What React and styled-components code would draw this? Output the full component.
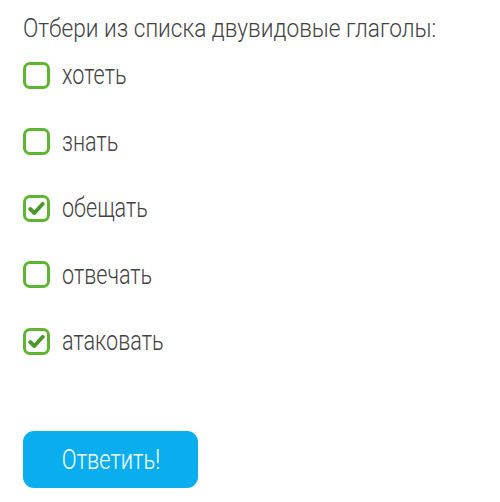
import React, { useState } from 'react';
import styled, { createGlobalStyle } from 'styled-components';

const GlobalStyle = createGlobalStyle`
  body {
    margin: 0;
    background: #ffffff;
    font-family: Roboto, 'Noto Sans', sans-serif;
  }
`;

const Page = styled.div`
  width: 500px;
  height: 502px;
  padding: 12px 23px 0;
  box-sizing: border-box;
  color: #424242;
`;

/* the reference uses a condensed face; squeeze Roboto Light to match */
const Narrow = styled.span`
  display: inline-block;
  white-space: nowrap;
  transform: scaleX(${({ $scale }) => $scale});
  transform-origin: ${({ $origin }) => $origin || 'left center'};
`;

const Title = styled.h2`
  margin: 0;
  font-size: 26px;
  font-weight: 300;
  line-height: 32px;
`;

const List = styled.ul`
  list-style: none;
  margin: 18px 0 0;
  padding: 0;
  display: flex;
  flex-direction: column;
  gap: 40.5px;
`;

const Item = styled.li`
  display: flex;
  align-items: center;
  gap: 12px;
  height: 26px;
  cursor: pointer;
`;

const Box = styled.span`
  flex: none;
  width: 27px;
  height: 27px;
  box-sizing: border-box;
  border: 3px solid #5db532;
  border-radius: 7px;
  display: flex;
  align-items: center;
  justify-content: center;
`;

const Label = styled.span`
  font-size: 27px;
  font-weight: 300;
  line-height: 30px;
`;

const Button = styled.button`
  display: flex;
  align-items: center;
  justify-content: center;
  margin-top: 77px;
  width: 175px;
  height: 57px;
  padding: 0;
  border: none;
  border-radius: 11px;
  background: #0aaeef;
  color: #ffffff;
  font-family: Roboto, sans-serif;
  font-size: 28px;
  font-weight: 300;
  cursor: pointer;
`;

const Check = () => (
  <svg width="17" height="15" viewBox="0 0 17 15">
    <path d="M2.2 8 L6.4 12 L14.8 2.8" fill="none" stroke="#48982a" strokeWidth="3.8" strokeLinecap="round" strokeLinejoin="round" />
  </svg>
);

const words = [
  { text: 'хотеть', checked: false },
  { text: 'знать', checked: false },
  { text: 'обещать', checked: true },
  { text: 'отвечать', checked: false },
  { text: 'атаковать', checked: true },
];

export default function App() {
  const [items, setItems] = useState(words);

  const toggle = (i) =>
    setItems(items.map((it, j) => (j === i ? { ...it, checked: !it.checked } : it)));

  return (
    <Page>
      <GlobalStyle />
      <Title>
        <Narrow $scale={0.87}>Отбери из списка двувидовые глаголы:</Narrow>
      </Title>
      <List>
        {items.map((it, i) => (
          <Item key={it.text} onClick={() => toggle(i)}>
            <Box>{it.checked && <Check />}</Box>
            <Label>
              <Narrow $scale={0.8}>{it.text}</Narrow>
            </Label>
          </Item>
        ))}
      </List>
      <Button>
        <Narrow $scale={0.78} $origin="center">Ответить!</Narrow>
      </Button>
    </Page>
  );
}
